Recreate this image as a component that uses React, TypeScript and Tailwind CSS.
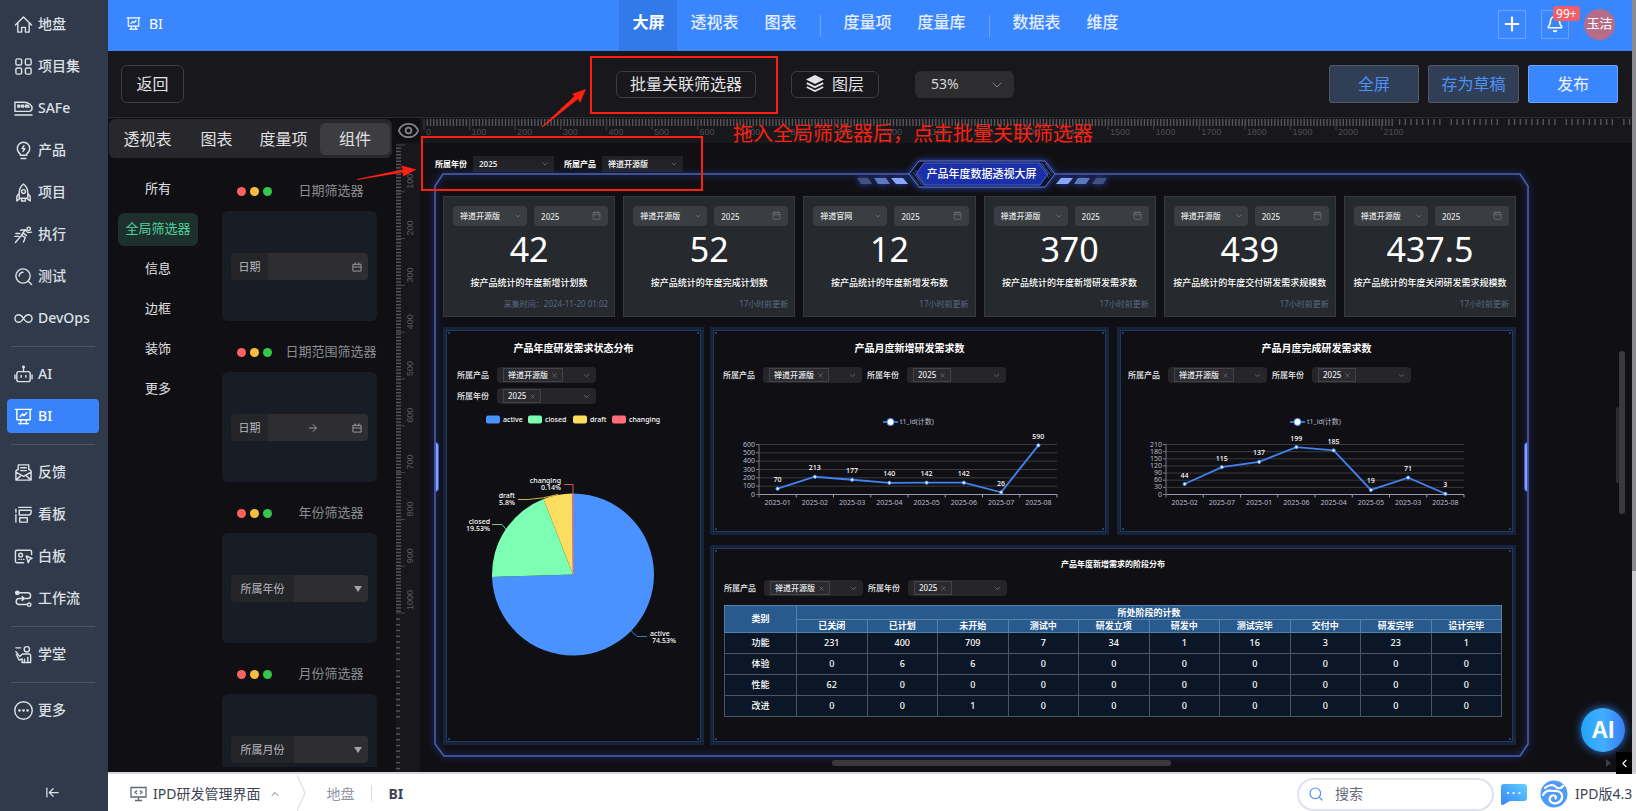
import React from "react";
import {
  ArrowLeftToLine,
  ArrowRight,
  Bell,
  Calendar,
  ChevronDown,
  ChevronLeft,
  ChevronUp,
  Eye,
  Plus,
  Search,
  X,
} from "lucide-react";

const TINY = "text-[8px] leading-[16px]";

/* ---------- sidebar ---------- */

const GLYPHS: Record<string, React.ReactNode> = {
  home: <path d="M1.5 10.5 10 2l8.500 8.500M4 8.500V18h4v-5h4v5h4V8.500" />,
  grid: (
    <>
      <rect x="2" y="2" width="6" height="6.500" rx="1.500" />
      <rect x="12" y="2" width="6" height="6.500" rx="1.500" />
      <rect x="2" y="11.500" width="6" height="6.500" rx="1.500" />
      <rect x="12" y="11.500" width="6" height="6.500" rx="1.500" />
    </>
  ),
  train: (
    <>
      <path d="M1 3.500h10c4 0 8 3 8 6 0 2-1 3.500-3 3.500H1zM1 16.800h18" />
      <path d="M4 6.500h2v2H4zM8 6.500h2v2H8zM12 6.500h2.500l1.500 2h-4z" />
    </>
  ),
  bulb: (
    <>
      <path d="M6.500 13.500C4.500 12 3.500 10 3.500 7.800a6.500 6.500 0 0 1 13 0c0 2.200-1 4.200-3 5.700V15h-7zM7.500 18.500h5" />
      <path d="m10.500 5-2 3h3l-2 3" />
    </>
  ),
  rocket: (
    <>
      <path d="M10 1c3 2.500 4.500 5.500 4.500 9v6h-9v-6c0-3.500 1.500-6.500 4.500-9zM5.500 11 3 14v5l2.500-2M14.500 11l2.500 3v5l-2.500-2M8 16v3h4v-3" />
      <circle cx="10" cy="9" r="2" />
    </>
  ),
  run: (
    <>
      <circle cx="15.500" cy="4" r="1.800" />
      <path d="M7 5.500 12 5l2.500 3 4-.5M12 5l-4.500 6 4.500 2-2 5M9.500 8.500 13 11M7 12l-5.500 6.500M2 9h4M1 12h4" />
    </>
  ),
  test: (
    <>
      <circle cx="9.500" cy="9.500" r="7.500" />
      <path d="m15 15 3.500 3.500M5.500 9.500a4 4 0 0 1 4-4" />
    </>
  ),
  infinity: (
    <path d="M10 10C8.500 7.500 7 6 5 6a4 4 0 0 0 0 8c2 0 3.500-1.500 5-4s3-4 5-4a4 4 0 0 1 0 8c-2 0-3.500-1.500-5-4z" />
  ),
  bot: (
    <>
      <rect x="3" y="7" width="14" height="10.500" rx="2" />
      <path d="M10 7V2M1 10.500v4M19 10.500v4M7.500 11v2M12.500 11v2" />
      <circle cx="10" cy="2" r=".8" />
    </>
  ),
  bi: (
    <>
      <path d="M1.500 2.500h17M3 2.500V13.500h14V2.500M6.500 18l1-4.500M13.500 18l-1-4.500M5 17.500h10M6.500 10l2.500-2.500 1.500 1.500 3-3" />
    </>
  ),
  mail: (
    <>
      <path d="M4.500 7V2h11v5M2 8.500V18h16V8.500L15.500 6M2 8.500 4.500 6M2 9.500l8 4.500 8-4.500M2.500 17.500l5-4.500M17.500 17.500l-5-4.500M7 5h6M7 8h6" />
    </>
  ),
  kanban: (
    <>
      <path d="M5 2.500h13M2 4.500v3M2 10v8M18 5.500H5.500v5H15a3 3 0 0 0 3-3zM6 13.500h8V18H6z" />
    </>
  ),
  board: (
    <>
      <path d="M18.500 8V5a1.500 1.500 0 0 0-1.500-1.500H3A1.500 1.500 0 0 0 1.500 5v10A1.500 1.500 0 0 0 3 16.500h7M13 9.500l6 2.500-2.500 1-1.500 3.500z" />
      <circle cx="7" cy="8.500" r="2" />
      <path d="M5 13h.5M7.500 13h.5M10 13h.5" />
    </>
  ),
  flow: (
    <>
      <path d="M4 4h10.500a3 3 0 0 1 0 6h-9a3.200 3.200 0 0 0 0 6.400H14M8.500 8l2.500 2-2.500 2" />
      <circle cx="3.500" cy="4" r="1.800" fill="currentColor" />
      <circle cx="16" cy="16.500" r="1.800" />
    </>
  ),
  teach: (
    <>
      <circle cx="13.500" cy="4.500" r="2.800" />
      <path d="M2 3h5M2 7l4 5 3-2.500h7A1.500 1.500 0 0 1 17.500 11v7.500h-9v-4L5.500 16 2.500 10M11 15v3.500M14.500 13v5" />
    </>
  ),
  more: (
    <>
      <circle cx="10" cy="10" r="9.200" />
      <path d="M5.500 10h.5M9.800 10h.5M14 10h.5" strokeWidth="2.400" />
    </>
  ),
};

function Glyph({ name, className }: { name: string; className?: string }) {
  return (
    <svg
      viewBox="0 0 20 20"
      fill="none"
      stroke="currentColor"
      strokeWidth="1.500"
      strokeLinecap="round"
      strokeLinejoin="round"
      aria-hidden="true"
      className={className}
    >
      {GLYPHS[name]}
    </svg>
  );
}

const NAV: [string, string][][] = [
  [
    ["home", "地盘"],
    ["grid", "项目集"],
    ["train", "SAFe"],
    ["bulb", "产品"],
    ["rocket", "项目"],
    ["run", "执行"],
    ["test", "测试"],
    ["infinity", "DevOps"],
  ],
  [
    ["bot", "AI"],
    ["bi", "BI"],
  ],
  [
    ["mail", "反馈"],
    ["kanban", "看板"],
    ["board", "白板"],
    ["flow", "工作流"],
  ],
  [["teach", "学堂"]],
  [["more", "更多"]],
];

function Sidebar() {
  return (
    <nav className="flex w-[108px] shrink-0 flex-col bg-[#303a4b] pt-[3px] text-[#dde0e5]">
      {NAV.map((group, g) => (
        <div key={g}>
          {g > 0 && (
            <div className="flex h-[14px] items-center pr-[13px] pl-[11px]">
              <div className="h-px w-full bg-[#4a5465]" />
            </div>
          )}
          {group.map(([icon, label]) => (
            <div key={label} className="flex h-[42px] items-center pr-[9px] pl-[7px]">
              <a
                href="#"
                className={
                  label === "BI"
                    ? "flex h-[34px] w-full items-center gap-[5px] rounded bg-[#3883fa] pl-[7px] text-sm font-medium text-white"
                    : "flex h-[34px] w-full items-center gap-[5px] rounded pl-[7px] text-sm font-medium"
                }
              >
                <Glyph name={icon} className="size-[19px] shrink-0" />
                <span>{label}</span>
              </a>
            </div>
          ))}
        </div>
      ))}
      <button aria-label="收起" className="mt-auto mr-[3px] mb-2 flex h-[22px] items-center justify-center">
        <ArrowLeftToLine size={15} strokeWidth={2} />
      </button>
    </nav>
  );
}

/* ---------- header and toolbar ---------- */

function NavLink({ label, active }: { label: string; active?: boolean }) {
  return (
    <a
      href="#"
      className={
        active
          ? "flex h-[51px] items-center bg-[#327ae9] px-[13px] pb-2 text-base font-bold text-white"
          : "flex h-[51px] items-center px-[13px] pb-2 text-base font-medium text-[#e3edfe]"
      }
    >
      {label}
    </a>
  );
}

function Bar() {
  return <span className="mx-[10px] h-[22px] w-px bg-[#6fa6fd]" />;
}

function Header() {
  return (
    <header className="flex h-[51px] shrink-0 items-center bg-[#3a86ff] text-white">
      <div className="flex flex-1 items-center gap-[8px] pb-1 pl-[18px] text-sm">
        <Glyph name="bi" className="size-[15px]" />
        <span>BI</span>
      </div>
      <div className="ml-[10px] flex items-center">
        <NavLink label="大屏" active />
        <NavLink label="透视表" />
        <NavLink label="图表" />
        <Bar />
        <NavLink label="度量项" />
        <NavLink label="度量库" />
        <Bar />
        <NavLink label="数据表" />
        <NavLink label="维度" />
      </div>
      <div className="flex flex-1 items-center justify-end gap-[15px] pr-[17px] pb-[3px]">
        <button aria-label="新建" className="flex h-[29px] w-[28px] items-center justify-center border border-[#6aa3fe]">
          <Plus size={22} strokeWidth={2.4} />
        </button>
        <button aria-label="通知" className="relative flex h-[29px] w-[28px] items-center justify-center border border-[#6aa3fe]">
          <Bell size={18} strokeWidth={2.2} />
          <span className="absolute -top-[5px] left-[11px] rounded-sm bg-[#ef5e69] px-[3px] text-xs leading-[15px]">
            99+
          </span>
        </button>
        <span className="flex size-[31px] items-center justify-center rounded-full bg-[#b66c88] text-[13px] whitespace-nowrap">
          玉洁
        </span>
      </div>
    </header>
  );
}

function LayersIcon() {
  return (
    <svg viewBox="0 0 18 17" className="h-[17px] w-[18px]" aria-hidden="true">
      <path d="M9 0 18 4.500 9 9 0 4.500z" fill="#e4e4e6" />
      <path d="M.8 8.200 9 12.200l8.200-4M.8 12 9 16l8.200-4" fill="none" stroke="#e4e4e6" strokeWidth="1.900" />
    </svg>
  );
}

function Toolbar() {
  return (
    <div className="flex h-[67px] shrink-0 items-center border-b border-[#2c2c30] bg-[#18181c] pr-[14px] pl-[13px] text-base leading-6 text-[#e2e2e4]">
      <button className="h-[38px] w-[63px] rounded-md border border-[#3d3d41] pb-px">返回</button>
      <div className="grow-[432]" />
      <div className="flex items-center">
        <button className="flex h-[27px] w-[140px] items-center justify-center rounded-md border border-[#3d3d41] pb-px">
          批量关联筛选器
        </button>
        <button className="ml-[35px] flex h-[27px] w-[88px] items-center justify-center gap-2 rounded-md border border-[#3d3d41] pb-px">
          <LayersIcon />
          图层
        </button>
        <div className="relative ml-[36px]">
          <select
            aria-label="缩放"
            className="h-[27px] w-[99px] appearance-none rounded-md bg-[#2d2d30] pb-[2px] pl-4 text-sm leading-[25px] text-[#d5d5d8]"
          >
            <option>53%</option>
          </select>
          <ChevronDown size={16} strokeWidth={1.4} className="pointer-events-none absolute top-[6px] right-[9px] text-[#8c8c90]" />
        </div>
      </div>
      <div className="grow-[315]" />
      <div className="flex gap-[9px]">
        <button className="h-[38px] w-[90px] rounded-xs border border-[#4d5969] bg-[#303f56] pb-px text-[#4d91fa]">全屏</button>
        <button className="h-[38px] w-[91px] rounded-xs border border-[#4d5969] bg-[#303f56] pb-px text-[#4d91fa]">存为草稿</button>
        <button className="h-[38px] w-[90px] rounded-xs border border-[#6aa3fe] bg-[#3a86ff] pb-px text-[#eef4ff]">发布</button>
      </div>
    </div>
  );
}

/* ---------- component library ---------- */

function LibraryCard({ title, label, kind }: { title: string; label: string; kind: "date" | "range" | "select" }) {
  return (
    <div>
      <div className="mb-[10px] flex h-5 items-center justify-between pl-[15px]">
        <div className="flex gap-1">
          <i className="size-[9px] rounded-full bg-[#fc625d]" />
          <i className="size-[9px] rounded-full bg-[#fcbc40]" />
          <i className="size-[9px] rounded-full bg-[#34c749]" />
        </div>
        <span className="w-[92px] text-center text-[13px] whitespace-nowrap text-[#8c8c8f]">{title}</span>
      </div>
      <div className="flex h-[110px] items-center rounded-md bg-[#181d25] px-[9px] pt-px">
        <div className="flex h-[27px] w-full overflow-hidden rounded-sm bg-[#2e2e31] text-[11px] text-[#b9b9bd]">
          <span
            className={
              kind === "select"
                ? "flex w-[63px] items-center justify-center bg-[#232529] pt-px"
                : "flex w-[37px] items-center justify-center bg-[#232529] pt-px"
            }
          >
            {label}
          </span>
          <span className="flex flex-1 items-center justify-end pr-[6px] text-[#9a9a9e]">
            {kind === "range" && <ArrowRight size={12} className="mr-[33px]" />}
            {kind === "select" ? (
              <svg viewBox="0 0 8 6" className="h-[6px] w-2" aria-hidden="true">
                <path d="M0 0h8L4 6z" fill="#a3a3a8" />
              </svg>
            ) : (
              <svg viewBox="0 0 11 11" className="size-[10px]" fill="none" stroke="#a3a3a8" aria-hidden="true">
                <path d="M1 2.500h9v7.500H1zM1 5.500h9M3.500.5v3M7.500.5v3" />
              </svg>
            )}
          </span>
        </div>
      </div>
    </div>
  );
}

function Library() {
  const categories = ["所有", "全局筛选器", "信息", "边框", "装饰", "更多"];
  return (
    <aside className="flex w-[284px] shrink-0 flex-col pt-px pl-px text-[#e0e0e2]">
      <div className="flex h-[39px] w-[283px] shrink-0 items-center rounded-md bg-[#28282c] pr-[2px] text-base whitespace-nowrap">
        <button className="w-[77px]">透视表</button>
        <button className="w-[61px]">图表</button>
        <button className="w-[73px]">度量项</button>
        <button className="h-[32px] w-[70px] rounded-md bg-[#3d3d41]">组件</button>
      </div>
      <div className="mb-[5px] flex min-h-0 flex-1 overflow-hidden pr-[15px] pl-[9px]">
        <div className="flex w-20 shrink-0 flex-col gap-[7px] pt-[15px] text-[13px]">
          {categories.map((c) => (
            <button
              key={c}
              className={
                c === "全局筛选器"
                  ? "h-[33px] rounded-md bg-[#1d302b] pb-[2px] text-[#4fd0a0]"
                  : "h-[33px] rounded-md pb-[2px]"
              }
            >
              {c}
            </button>
          ))}
        </div>
        <div className="ml-6 flex flex-1 flex-col gap-[21px] pt-[23px]">
          <LibraryCard title="日期筛选器" label="日期" kind="date" />
          <LibraryCard title="日期范围筛选器" label="日期" kind="range" />
          <LibraryCard title="年份筛选器" label="所属年份" kind="select" />
          <LibraryCard title="月份筛选器" label="所属月份" kind="select" />
        </div>
      </div>
    </aside>
  );
}

/* ---------- rulers ---------- */

const UNIT = 45.6;

function ticks(count: number, horizontal: boolean, start: number, far: number) {
  const out: React.ReactNode[] = [];
  const end = start + UNIT * count;
  for (let p = start + 3.26; p < end + 11; p += 3.26) {
    out.push(
      horizontal ? (
        <path key={p} d={`M${p} 1v7`} stroke="#55555a" strokeWidth="1.400" />
      ) : (
        <path key={p} d={`M0 ${p}h5`} stroke="#55555a" strokeWidth="1.400" />
      ),
    );
  }
  let i = 0;
  for (let p = end + 18; p < far; p += 5.75) {
    i += 1;
    if (i % 10 === 9) continue;
    out.push(
      horizontal ? (
        <path key={p} d={`M${p} 1v6`} stroke="#55555a" strokeWidth="1.400" />
      ) : (
        <path key={p} d={`M0 ${p}h4`} stroke="#55555a" strokeWidth="1.400" />
      ),
    );
  }
  return out;
}

function TopRuler() {
  return (
    <svg className="block h-[25px] w-full" fill="#4d4d52" fontSize="9" fontFamily="Liberation Sans, sans-serif" aria-hidden="true">
      {ticks(21, true, 4, 2600)}
      {Array.from({ length: 22 }, (_, i) => (
        <g key={i}>
          <path d={`M${4 + i * UNIT} 1v11`} stroke="#3f3f44" />
          <text x={6 + i * UNIT} y="17">
            {i * 100}
          </text>
        </g>
      ))}
    </svg>
  );
}

function SideRuler() {
  return (
    <svg className="block h-full w-6" fill="#5a5a5f" fontSize="9" fontFamily="Liberation Sans, sans-serif" aria-hidden="true">
      {ticks(10, false, 2, 1800)}
      {Array.from({ length: 11 }, (_, i) => (
        <g key={i}>
          <path d={`M0 ${2 + i * 46.8}h9`} stroke="#46464b" />
          {i > 0 && (
            <text transform={`translate(17 ${-1 + i * 46.8}) rotate(-90)`}>{i * 100}</text>
          )}
        </g>
      ))}
    </svg>
  );
}

/* ---------- canvas controls ---------- */

function GlobalFilter({ label, value }: { label: string; value: string }) {
  return (
    <label className="flex items-center gap-[6px] font-semibold text-white">
      <span className="whitespace-nowrap">{label}</span>
      <span className="relative">
        <select className="block h-4 w-[81px] appearance-none bg-[#222226] pl-[6px] text-[#e4e4e6]">
          <option>{value}</option>
        </select>
        <ChevronDown size={8} className="pointer-events-none absolute top-1 right-[5px] text-[#7d7d82]" />
      </span>
    </label>
  );
}

function TagFilter({ label, value }: { label: string; value: string }) {
  return (
    <div role="group" aria-label={label} className={`flex items-center gap-2 font-medium whitespace-nowrap text-[#e8e8ea] ${TINY}`}>
      <span>{label}</span>
      <div className="flex h-4 w-[99px] items-center rounded-sm bg-[#26262a] pr-[5px] pl-[6px]">
        <span className="flex h-[14px] items-center gap-[3px] border border-[#424247] bg-[#2b2b2f] px-[4px] leading-[12px]">
          {value}
          <button aria-label={`移除${value}`}>
            <X size={7} strokeWidth={1.8} className="text-[#8b8b90]" />
          </button>
        </span>
        <button aria-label="展开" className="ml-auto">
          <ChevronDown size={9} className="text-[#77777c]" />
        </button>
      </div>
    </div>
  );
}

type Kpi = { product: string; value: string; title: string; note: string };

const KPIS: Kpi[] = [
  { product: "禅道开源版", value: "42", title: "按产品统计的年度新增计划数", note: "采集时间：2024-11-20 01:02" },
  { product: "禅道开源版", value: "52", title: "按产品统计的年度完成计划数", note: "17小时前更新" },
  { product: "禅道官网", value: "12", title: "按产品统计的年度新增发布数", note: "17小时前更新" },
  { product: "禅道开源版", value: "370", title: "按产品统计的年度新增研发需求数", note: "17小时前更新" },
  { product: "禅道开源版", value: "439", title: "按产品统计的年度交付研发需求规模数", note: "17小时前更新" },
  { product: "禅道开源版", value: "437.5", title: "按产品统计的年度关闭研发需求规模数", note: "17小时前更新" },
];

function KpiCard({ product, value, title, note }: Kpi) {
  return (
    <div className="h-[121px] border border-[#36393d] bg-[#26292d] pt-[9px] pr-[6px] pl-[9px] whitespace-nowrap">
      <div className={`grid grid-cols-2 gap-[7px] font-medium text-[#e2e2e4] ${TINY}`}>
        <div className="relative">
          <select aria-label="产品" className="block h-5 w-full appearance-none rounded-sm bg-[#3a3d41] pl-[7px]">
            <option>{product}</option>
          </select>
          <ChevronDown size={8} className="pointer-events-none absolute top-[6px] right-[5px] text-[#7a7d81]" />
        </div>
        <div className="relative">
          <input aria-label="年份" defaultValue="2025" className="block h-5 w-full rounded-sm bg-[#3a3d41] pl-[7px]" />
          <Calendar size={9} className="pointer-events-none absolute top-[5px] right-[7px] text-[#74777b]" />
        </div>
      </div>
      <div className="flex h-[46px] items-center justify-center pr-[3px] text-[34px] text-white">{value}</div>
      <div className="flex h-[22px] items-center justify-center pr-[3px] text-[9px] font-medium text-white">{title}</div>
      <div className={`flex h-5 items-center justify-end text-[#5b6984] ${TINY}`}>{note}</div>
    </div>
  );
}

function Panel({ title, small, children }: { title: string; small?: boolean; children: React.ReactNode }) {
  return (
    <section className="relative flex min-h-0 min-w-0 flex-col border-[3px] border-[#15243c]">
      <div className="flex min-h-0 flex-1 flex-col border border-[#22375a]">
        <i className="absolute top-[2px] left-[2px] size-[2px] bg-[#1d4270]" />
        <i className="absolute top-[2px] right-[2px] size-[2px] bg-[#1d4270]" />
        <i className="absolute bottom-[2px] left-[2px] size-[2px] bg-[#1d4270]" />
        <i className="absolute right-[2px] bottom-[2px] size-[2px] bg-[#1d4270]" />
        <h2
          className={
            small
              ? "h-[31px] pt-[7px] text-center text-[8px] leading-4 font-bold text-white"
              : "h-9 pt-[9px] text-center text-[10px] leading-4 font-bold text-white"
          }
        >
          {title}
        </h2>
        {children}
      </div>
    </section>
  );
}

/* ---------- charts ---------- */

type Slice = { name: string; pct: number; color: string };

const SLICES: Slice[] = [
  { name: "active", pct: 74.53, color: "#4992ff" },
  { name: "closed", pct: 19.53, color: "#7cffb2" },
  { name: "draft", pct: 5.8, color: "#fddd60" },
  { name: "changing", pct: 0.14, color: "#ff6e76" },
];

const LEGEND_X = [39, 81, 126, 165];

const CALLOUTS: { d: string; x: number; y: number; anchor: "start" | "end" }[] = [
  { d: "M184 223l6 6h10", x: 203, y: 228, anchor: "start" },
  { d: "M60 123l-5-6H45", x: 43, y: 116, anchor: "end" },
  { d: "M111 87q-14 4-30 5H71", x: 68, y: 90, anchor: "end" },
  { d: "M126 86v-9h-9", x: 114, y: 75, anchor: "end" },
];

function PieChart() {
  const cx = 126;
  const cy = 167;
  const r = 81;
  let acc = 0;
  const at = (t: number) => `${cx + r * Math.sin(t * 2 * Math.PI)} ${cy - r * Math.cos(t * 2 * Math.PI)}`;
  return (
    <svg viewBox="0 0 253 330" className="block min-h-0 w-full flex-1" fontSize="7" fontWeight="500" fill="#fff" role="img" aria-label="产品年度研发需求状态分布">
      {SLICES.map((s, i) => {
        const from = acc / 100;
        acc += s.pct;
        const to = acc / 100;
        const c = CALLOUTS[i];
        return (
          <g key={s.name}>
            <rect x={LEGEND_X[i]} y="8" width="14" height="8" rx="2" fill={s.color} />
            <text x={LEGEND_X[i] + 17} y="14">
              {s.name}
            </text>
            <path d={`M${cx} ${cy}L${at(from)}A${r} ${r} 0 ${s.pct > 50 ? 1 : 0} 1 ${at(to)}Z`} fill={s.color} stroke={i === 3 ? s.color : "none"} strokeWidth=".5" />
            <path d={c.d} fill="none" stroke={s.color} strokeWidth=".8" />
            <text x={c.x} y={c.y} textAnchor={c.anchor}>
              {s.name}
            </text>
            <text x={c.anchor === "start" ? c.x + 2 : c.x} y={c.y + 7} textAnchor={c.anchor}>
              {s.pct}%
            </text>
          </g>
        );
      })}
    </svg>
  );
}

function LineChart({ points, max, step }: { points: [string, number][]; max: number; step: number }) {
  const x0 = 45;
  const w = 298;
  const top = 61.5;
  const h = 50;
  const px = (i: number) => x0 + (w / points.length) * (i + 0.5);
  const py = (v: number) => top + h - (v / max) * h;
  const levels = Array.from({ length: max / step + 1 }, (_, i) => i * step);
  return (
    <svg viewBox="0 0 391 148" className="block min-h-0 w-full flex-1" fontSize="7" role="img" aria-label="t1_id(计数)">
      <path d="M169 39h15" stroke="#4992ff" strokeWidth="1.500" />
      <circle cx="176.500" cy="39" r="3.500" fill="#fff" stroke="#4992ff" />
      <text x="186" y="41" fill="#b9b8ce">
        t1_id(计数)
      </text>
      {levels.map((v) => (
        <g key={v}>
          <path d={`M${x0} ${py(v)}h${w}`} stroke={v === 0 ? "#9a99ab" : "#39393f"} />
          <path d={`M${x0 - 3} ${py(v)}h3`} stroke="#9a99ab" strokeWidth=".8" />
          <text x={x0 - 4} y={py(v) + 2} textAnchor="end" fill="#b9b8ce">
            {v}
          </text>
        </g>
      ))}
      <path d={`M${x0} ${top}v${h + 3}`} stroke="#77768a" />
      {points.map(([label], i) => (
        <g key={label}>
          <path d={`M${x0 + (w / points.length) * (i + 1)} ${top + h}v3`} stroke="#9a99ab" />
          <text x={px(i)} y={top + h + 10} textAnchor="middle" fill="#b9b8ce">
            {label}
          </text>
        </g>
      ))}
      <polyline points={points.map(([, v], i) => `${px(i)},${py(v)}`).join(" ")} fill="none" stroke="#4083f0" strokeWidth="1.800" />
      {points.map(([label, v], i) => (
        <g key={label}>
          <circle cx={px(i)} cy={py(v)} r="1.600" fill="#fff" stroke="#4992ff" />
          <text x={px(i)} y={py(v) - 6.5} textAnchor="middle" fill="#fff" fontWeight="500">
            {v}
          </text>
        </g>
      ))}
    </svg>
  );
}

const ADDED: [string, number][] = [
  ["2025-01", 70],
  ["2025-02", 213],
  ["2025-03", 177],
  ["2025-04", 140],
  ["2025-05", 142],
  ["2025-06", 142],
  ["2025-07", 26],
  ["2025-08", 590],
];

const FINISHED: [string, number][] = [
  ["2025-02", 44],
  ["2025-07", 115],
  ["2025-01", 137],
  ["2025-06", 199],
  ["2025-04", 185],
  ["2025-05", 19],
  ["2025-03", 71],
  ["2025-08", 3],
];

const STAGES = ["已关闭", "已计划", "未开始", "测试中", "研发立项", "研发中", "测试完毕", "交付中", "研发完毕", "设计完毕"];

const ROWS: [string, number[]][] = [
  ["功能", [231, 400, 709, 7, 34, 1, 16, 3, 23, 1]],
  ["体验", [0, 6, 6, 0, 0, 0, 0, 0, 0, 0]],
  ["性能", [62, 0, 0, 0, 0, 0, 0, 0, 0, 0]],
  ["改进", [0, 0, 1, 0, 0, 0, 0, 0, 0, 0]],
];

function StageTable() {
  return (
    <table className="mt-[9px] w-full table-fixed border-collapse text-center text-[9px] leading-[12px] font-medium text-white">
      <thead className="bg-[#285a8e]">
        <tr>
          <th rowSpan={2} className="w-[72px] border border-[#5580a8] p-0">
            类别
          </th>
          <th colSpan={10} className="h-[14px] border border-[#5580a8] p-0">
            所处阶段的计数
          </th>
        </tr>
        <tr>
          {STAGES.map((s) => (
            <th key={s} className="h-[13px] border border-[#5580a8] p-0">
              {s}
            </th>
          ))}
        </tr>
      </thead>
      <tbody className="bg-[#0b1726]">
        {ROWS.map(([name, cells]) => (
          <tr key={name}>
            <td className="h-[21px] border border-[#485666] p-0">{name}</td>
            {cells.map((v, i) => (
              <td key={i} className="h-[21px] border border-[#485666] p-0">
                {v}
              </td>
            ))}
          </tr>
        ))}
      </tbody>
    </table>
  );
}

/* ---------- artboard ---------- */

function TitleBadge() {
  return (
    <div className="absolute -top-[14px] left-1/2 flex h-[28px] w-[250px] -translate-x-1/2 items-center justify-center">
      <svg viewBox="0 0 250 28" className="absolute inset-0 h-full w-full drop-shadow-[0_0_3px_#2b4bd0]" aria-hidden="true">
        <path d="M52 14 62 1h126l10 13-10 13H62z" fill="#0d1226" stroke="#5a76d8" />
        <path d="M59 14 67 3h116l8 11-8 11H67z" fill="#1b30a8" stroke="#4963cf" />
        <path d="M54 14l8 11M56 12l9 13M58 10l11 15M196 14l-8-11M194 16l-9-13M192 18l-11-15" stroke="#3a4f94" />
        <path d="M34 18h12l5 6H39zM216 18h-12l-5 6h12z" fill="#8aa6fb" />
        <path d="M17 18h12l4 6H21zM233 18h-12l-4 6h12z" fill="#6079bd" />
        <path d="M0 18h11l4 6H4zM250 18h-11l-4 6h11z" fill="#42527d" />
      </svg>
      <h1 className="relative text-[11px] leading-4 font-medium text-white">产品年度数据透视大屏</h1>
    </div>
  );
}

function FrameDecoration() {
  return (
    <div className="pointer-events-none absolute inset-0" aria-hidden="true">
      <svg viewBox="0 0 1093 582" preserveAspectRatio="none" className="h-full w-full overflow-visible drop-shadow-[0_0_3px_#3050d8]">
        <path
          d="M474 0H8L0 12v558l9 12h1076l8-12V12l-8-12H620"
          fill="none"
          stroke="#4d62ae"
          strokeWidth="1.500"
          vectorEffect="non-scaling-stroke"
        />
      </svg>
      <div className="absolute top-[46%] left-0 h-[50px] w-1 rounded-r-sm border border-[#3f58c0] bg-[#8aa0f2]" />
      <div className="absolute top-[46%] right-0 h-[50px] w-1 rounded-l-sm border border-[#3f58c0] bg-[#8aa0f2]" />
    </div>
  );
}

function Artboard() {
  return (
    <div className="relative flex min-h-0 min-w-0 flex-1 flex-col pt-[13px] pr-[104px] pb-4 pl-[15px]">
      <div className={`flex h-4 items-center gap-[10px] ${TINY}`}>
        <GlobalFilter label="所属年份" value="2025" />
        <GlobalFilter label="所属产品" value="禅道开源版" />
      </div>
      <div className="relative mt-[2px] flex min-h-0 flex-1 flex-col pt-[22px] pr-3 pb-[11px] pl-2">
        <FrameDecoration />
        <TitleBadge />
        <div className="grid grid-cols-6 gap-2">
          {KPIS.map((k) => (
            <KpiCard key={k.title} {...k} />
          ))}
        </div>
        <div className="mt-[10px] grid min-h-0 flex-1 grid-cols-[261fr_806fr] gap-[6px]">
          <Panel title="产品年度研发需求状态分布">
            <div className="flex flex-col gap-[5px] pl-[10px]">
              <TagFilter label="所属产品" value="禅道开源版" />
              <TagFilter label="所属年份" value="2025" />
            </div>
            <PieChart />
          </Panel>
          <div className="flex min-h-0 min-w-0 flex-col gap-[10px]">
            <div className="grid grid-cols-2 gap-2">
              <Panel title="产品月度新增研发需求数">
                <div className="flex gap-[5px] pl-[9px]">
                  <TagFilter label="所属产品" value="禅道开源版" />
                  <TagFilter label="所属年份" value="2025" />
                </div>
                <LineChart points={ADDED} max={600} step={100} />
              </Panel>
              <Panel title="产品月度完成研发需求数">
                <div className="flex gap-[5px] pl-[7px]">
                  <TagFilter label="所属产品" value="禅道开源版" />
                  <TagFilter label="所属年份" value="2025" />
                </div>
                <LineChart points={FINISHED} max={210} step={30} />
              </Panel>
            </div>
            <div className="flex min-h-0 flex-1 flex-col *:flex-1">
              <Panel title="产品年度新增需求的阶段分布" small>
                <div className="px-[10px]">
                  <div className="flex gap-[5px]">
                    <TagFilter label="所属产品" value="禅道开源版" />
                    <TagFilter label="所属年份" value="2025" />
                  </div>
                  <StageTable />
                </div>
              </Panel>
            </div>
          </div>
        </div>
      </div>
      <div className="absolute bottom-[6px] left-[34%] h-[6px] w-[28%] rounded-full bg-[#3a3a3e]" />
      <div className="absolute top-[33%] right-[7px] h-[26%] w-[6px] rounded-full bg-[#3a3a3e]" />
      <div className="absolute top-[42%] right-[13px] h-[12%] w-[3px] rounded-full bg-[#2c2c30]" />
    </div>
  );
}

/* ---------- footer ---------- */

function Footer() {
  return (
    <footer className="flex h-[39px] shrink-0 items-center border-t-2 border-[#d5d5da] bg-white text-sm whitespace-nowrap text-[#3c4353]">
      <button className="flex items-center gap-[6px] pt-[2px] pl-[22px]">
        <svg viewBox="0 0 17 16" className="h-4 w-[17px]" fill="none" stroke="#5e6678" strokeWidth="1.300" aria-hidden="true">
          <path d="M1 1.500h15v9.500H1zM5 14.500h7M8.500 11v3.500M7 4.500 5 6.300 7 8M10 4.500l2 1.800L10 8" />
        </svg>
        IPD研发管理界面
        <ChevronUp size={12} strokeWidth={1.8} className="ml-[3px] text-[#5e6678]" />
      </button>
      <svg viewBox="0 0 9 37" className="ml-4 h-[37px] w-[9px]" fill="none" stroke="#dfe1e6" strokeWidth="1.300" aria-hidden="true">
        <path d="M0 1l8 18-8 18" />
      </svg>
      <a href="#" className="ml-5 pt-[2px] text-[#8f95a3]">
        地盘
      </a>
      <span className="mr-4 ml-[17px] h-4 w-px bg-[#d9dbe0]" />
      <a href="#" className="pt-[2px] font-bold">
        BI
      </a>
      <div className="ml-auto flex items-center pt-[3px]">
        <label className="flex h-[33px] w-[197px] items-center gap-[11px] rounded-full border-2 border-[#e0e1ee] pl-[9px]">
          <Search size={16} strokeWidth={1.8} className="shrink-0 text-[#4f93f7]" />
          <input
            aria-label="搜索"
            placeholder="搜索"
            className="w-full bg-transparent outline-none placeholder:text-[#646b7b]"
          />
        </label>
        <svg viewBox="0 0 26 21" className="ml-[7px] h-[21px] w-[26px]" aria-hidden="true">
          <defs>
            <linearGradient id="chat" x1="0" y1="1" x2="1" y2="0">
              <stop offset="0" stopColor="#3683f7" />
              <stop offset="1" stopColor="#5fd0ff" />
            </linearGradient>
          </defs>
          <path d="M3 0h20a3 3 0 0 1 3 3v11a3 3 0 0 1-3 3H9l-7 4q-2 .5-2-2V3a3 3 0 0 1 3-3z" fill="url(#chat)" />
          <path d="M7 9h.1M12.500 9h.1M18.500 9h.1" stroke="#fff" strokeWidth="2.200" strokeLinecap="round" />
        </svg>
        <svg viewBox="0 0 28 28" className="ml-[13px] size-[28px]" fill="none" stroke="#fff" strokeLinecap="round" aria-hidden="true">
          <circle cx="14" cy="14" r="13.500" fill="#4f9bf8" stroke="none" />
          <path d="M5 8c3-3 8-4 11-1 2 1.800 5 1.800 7-1" strokeWidth="2.200" />
          <path d="M3 15c2-4 6-5 10-4 6-1 10 2 9 7-1 5-8 7-11 4-3-3-.5-7 3-6.500 2 .3 2.500 2 1.500 3" strokeWidth="2.200" />
        </svg>
        <span className="ml-[7px] w-[61px]">IPD版4.3</span>
      </div>
    </footer>
  );
}

/* ---------- tutorial annotations ---------- */

function Annotations() {
  return (
    <div className="pointer-events-none absolute inset-0 overflow-hidden">
      <div className="absolute top-[56px] left-[590px] h-[58px] w-[188px] border-2 border-[#fe2010]" />
      <div className="absolute top-[136px] left-[421px] h-[55px] w-[282px] border-2 border-[#fe2010]" />
      <svg className="absolute inset-0 h-full w-full" fill="#fe2010" aria-hidden="true">
        <path d="M542 126.500 574.500 96l-2.500-2 14-5-6 14-2-4-35.500 28.500z" />
        <path d="M357 179l46-9.500-2-4 15.500 4-13.500 7v-4L357 180z" />
      </svg>
      <p className="absolute top-[119px] left-[733px] text-xl leading-[30px] whitespace-nowrap text-[#fe2010]">
        拖入全局筛选器后，点击批量关联筛选器
      </p>
    </div>
  );
}

export default function App() {
  return (
    <div
      lang="zh-CN"
      className="relative flex h-screen overflow-hidden bg-[#101014] font-['Noto_Sans','Noto_Sans_CJK_SC',sans-serif]"
    >
      <Sidebar />
      <div className="flex min-w-0 flex-1 flex-col">
        <div className="flex min-h-0 flex-1">
          <div className="relative flex min-w-0 flex-1 flex-col">
            <Header />
            <Toolbar />
            <div className="flex min-h-0 flex-1">
              <Library />
              <div className="ml-1 flex w-6 shrink-0 flex-col overflow-hidden bg-[#18181c]">
                <div className="flex h-[25px] shrink-0 items-center justify-center bg-[#101014]">
                  <Eye size={23} strokeWidth={1.8} className="shrink-0 text-[#86868a]" />
                </div>
                <div className="min-h-0 flex-1">
                  <SideRuler />
                </div>
              </div>
              <div className="flex min-w-0 flex-1 flex-col">
                <div className="h-[25px] shrink-0 bg-[#18181c]">
                  <TopRuler />
                </div>
                <Artboard />
              </div>
            </div>
            <button className="absolute right-[7px] bottom-[20px] z-10 size-[44px] rounded-full bg-linear-to-r from-[#1ba4fb] via-[#42aefc] to-[#3a7cf5] font-['Liberation_Sans',sans-serif] text-[23px] font-bold text-white shadow-[0_0_8px_#2b7be0]">
              AI
            </button>
            <svg viewBox="0 0 5 8" className="absolute right-[21px] bottom-[5px] h-2 w-[5px]" aria-hidden="true">
              <path d="M0 0l5 4-5 4z" fill="#3f3f43" />
            </svg>
            <button
              aria-label="展开侧栏"
              className="absolute right-0 -bottom-[2px] z-10 flex h-[22px] w-4 items-center justify-center bg-black text-white"
            >
              <ChevronLeft size={13} />
            </button>
          </div>
          <div className="w-1 shrink-0 bg-[#cbcbcd]">
            <div className="h-[74%] bg-[#8b8b8d]" />
          </div>
        </div>
        <Footer />
      </div>
      <Annotations />
    </div>
  );
}
